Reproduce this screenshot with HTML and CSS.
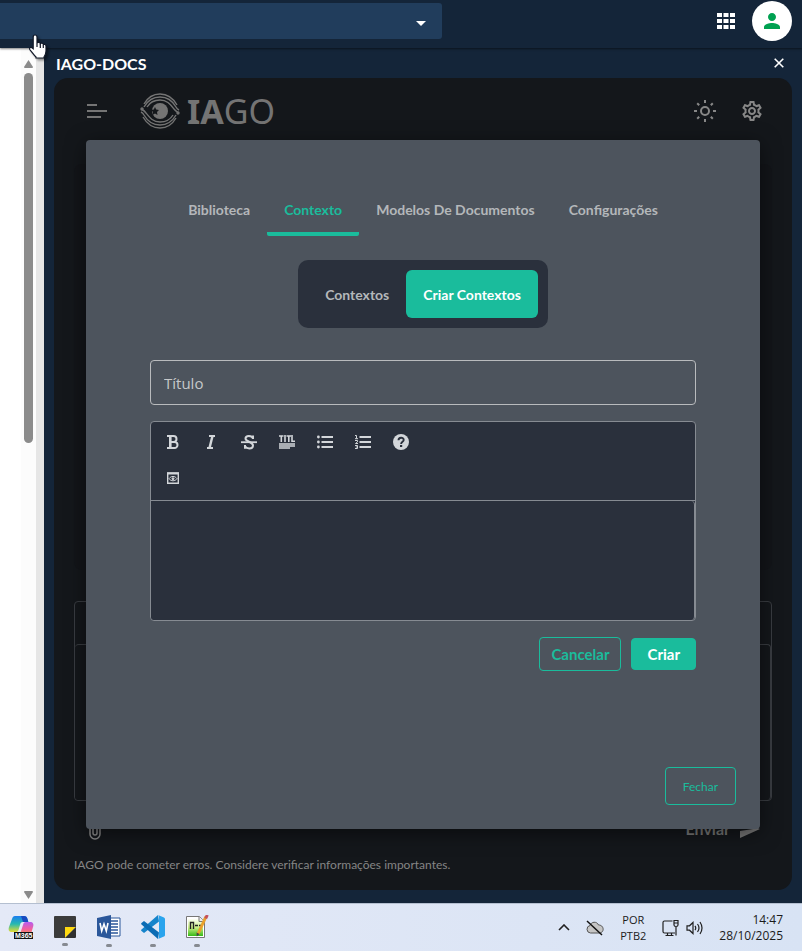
FILE: index.html
```html
<!DOCTYPE html>
<html lang="pt-BR">
<head>
    <meta charset="UTF-8">
    <meta name="viewport" content="width=device-width, initial-scale=1.0">
    <title>IAGO-DOCS</title>
    <link rel="stylesheet" href="styles.css">
</head>
<body>

<header class="topbar">
    <div class="unit">
        <select class="unit-select" aria-label="Unidade"><option></option></select>
        <svg class="unit-caret" width="10" height="5" viewBox="0 0 10 5"><path d="M0 0h10L5 5z" fill="#fff"/></svg>
    </div>
    <button class="icon-btn apps" aria-label="Aplicativos">
        <svg width="18" height="16" viewBox="0 0 18 16" fill="#fff"><path d="M0 0h5v4H0zM6.500 0h5v4h-5zM13 0h5v4h-5zM0 6h5v4H0zM6.500 6h5v4h-5zM13 6h5v4h-5zM0 12h5v4H0zM6.500 12h5v4h-5zM13 12h5v4h-5z"/></svg>
    </button>
    <button class="icon-btn avatar" aria-label="Perfil">
        <svg width="16" height="16" viewBox="4 4 16 16" fill="#00a151"><path d="M12 12c2.210 0 4-1.790 4-4s-1.790-4-4-4-4 1.790-4 4 1.790 4 4 4zm0 2c-2.670 0-8 1.340-8 4v2h16v-2c0-2.660-5.330-4-8-4z"/></svg>
    </button>
    <svg class="cursor" width="24" height="28" viewBox="0 0 24 28"><path d="M8 2c1.500 0 2 1 2 2v6c.5-1 3-1 3.300.6 1-.8 2.900-.4 3 .9 1.200-.5 2.700.1 2.700 1.500v5c0 2.500-.8 4.200-2 6v1H9v-1c-2-1.700-4-5-6-7.200-1.300-1.600.4-3 2-2l1.200 1V4c0-1 .4-2 1.800-2z" fill="#fff" stroke="#111827" stroke-width="1.200"/><path d="M10 10v4M13.300 11v4M16.300 12v3" stroke="#111827" stroke-width="1.200"/></svg>
</header>

<div class="workspace">
    <aside class="document">
        <div class="scroll">
            <svg width="9" height="8" viewBox="0 0 9 8" fill="#8b8b8b"><path d="M4.500 0 9 7q0 1-1 1H1Q0 8 0 7z"/></svg>
            <div class="thumb"></div>
            <svg width="9" height="8" viewBox="0 0 9 8" fill="#8b8b8b"><path d="M4.500 8 0 1q0-1 1-1h7q1 0 1 1z"/></svg>
        </div>
    </aside>

    <section class="panel">
        <div class="panel-head">
            <h1>IAGO-DOCS</h1>
            <button class="icon-btn close" aria-label="Fechar painel">
                <svg width="10" height="10" viewBox="0 0 10 10" stroke="#fff" stroke-width="1.600"><path d="M.7.7l8.600 8.600M9.300.7L.7 9.300"/></svg>
            </button>
        </div>

        <div class="iago">
            <div class="iago-head">
                <button class="icon-btn menu" aria-label="Menu">
                    <svg width="20" height="16" viewBox="0 0 20 16" stroke="#757575" stroke-width="2"><path d="M0 2h10M0 8h20M0 14h14"/></svg>
                </button>
                <div class="logo">
                    <svg width="40" height="36" viewBox="0 0 40 36" fill="none" stroke="#747474" stroke-width="1.400">
                        <path d="M4 11C8 4 13 1 20 1c8 0 13 4 17 11M4 14C8 7 13 4 20 4c7 0 12 3 16 10 1 2 2 2.500 3 3M7 14c3-5 8-7 13-7 7 0 10 4 14 9 1.500 2 2.500 2.500 4 3.500"/>
                        <path d="M36 25C32 32 27 35 20 35c-8 0-13-4-17-11M36 22C32 29 27 32 20 32c-7 0-12-3-16-10-1-2-2-2.500-3-3M33 22c-3 5-8 7-13 7-7 0-10-4-14-9-1-1.500-2-2.500-4-3.500"/>
                        <circle cx="20" cy="18" r="8" fill="#747474" stroke="none"/>
                        <path d="M15 14l1.200 2.600 2.800.4-2 2 .5 3-2.500-1.500L12.500 22l.5-3-2-2 2.800-.4z" fill="#14171b" stroke="none"/>
                        <circle cx="2" cy="16" r="1" fill="#747474"/><circle cx="38" cy="20" r="1" fill="#747474"/>
                    </svg>
                    <span><b>IA</b>GO</span>
                </div>
                <button class="icon-btn" aria-label="Tema claro">
                    <svg width="22" height="22" viewBox="0 0 22 22" fill="none" stroke="#878787" stroke-width="2"><circle cx="11" cy="11" r="4"/><path d="M11 0v3M11 19v3M0 11h3M19 11h3M3.200 3.200l2 2M16.800 16.800l2 2M3.200 18.800l2-2M16.800 5.200l2-2"/></svg>
                </button>
                <button class="icon-btn" aria-label="Ajustes">
                    <svg width="24" height="24" viewBox="0 0 24 24" fill="#878787"><path d="M19.430 12.980c.04-.32.07-.64.07-.98 0-.34-.03-.66-.07-.98l2.110-1.650c.19-.15.24-.42.12-.64l-2-3.460c-.09-.16-.26-.25-.44-.25-.06 0-.12.01-.17.03l-2.490 1c-.52-.4-1.080-.73-1.690-.98l-.38-2.650C14.460 2.180 14.250 2 14 2h-4c-.25 0-.46.18-.49.42l-.38 2.650c-.61.25-1.170.59-1.690.98l-2.490-1c-.06-.02-.12-.03-.18-.03-.17 0-.34.09-.43.25l-2 3.460c-.13.22-.07.49.12.64l2.110 1.650c-.04.32-.07.65-.07.98 0 .33.03.66.07.98l-2.110 1.650c-.19.15-.24.42-.12.64l2 3.460c.09.16.26.25.44.25.06 0 .12-.01.17-.03l2.490-1c.52.4 1.080.73 1.690.98l.38 2.650c.03.24.24.42.49.42h4c.25 0 .46-.18.49-.42l.38-2.650c.61-.25 1.170-.59 1.690-.98l2.490 1c.06.02.12.03.18.03.17 0 .34-.09.43-.25l2-3.460c.12-.22.07-.49-.12-.64l-2.110-1.650zm-1.980-1.710c.04.31.05.52.05.73 0 .21-.02.43-.05.73l-.14 1.130.89.7 1.080.84-.7 1.210-1.270-.51-1.040-.42-.9.68c-.43.32-.84.56-1.250.73l-1.060.43-.16 1.130-.2 1.350h-1.400l-.19-1.350-.16-1.130-1.060-.43c-.43-.18-.83-.41-1.230-.71l-.91-.7-1.060.43-1.270.51-.7-1.210 1.080-.84.89-.7-.14-1.130c-.03-.31-.05-.54-.05-.74s.02-.43.05-.73l.14-1.130-.89-.7-1.080-.84.7-1.210 1.270.51 1.040.42.9-.68c.43-.32.84-.56 1.250-.73l1.060-.43.16-1.130.2-1.350h1.390l.19 1.350.16 1.130 1.060.43c.43.18.83.41 1.230.71l.91.7 1.060-.43 1.270-.51.7 1.210-1.070.85-.89.7.14 1.130zM12 8c-2.210 0-4 1.790-4 4s1.790 4 4 4 4-1.790 4-4-1.790-4-4-4zm0 6c-1.100 0-2-.9-2-2s.9-2 2-2 2 .9 2 2-.9 2-2 2z"/></svg>
                </button>
            </div>
            <div class="chat"></div>
            <div class="composer">
                <div class="composer-tools"></div>
                <textarea class="composer-text" aria-label="Mensagem"></textarea>
            </div>
            <div class="composer-actions">
                <button class="icon-btn" aria-label="Anexar">
                    <svg width="12" height="22" viewBox="0 0 12 22" fill="none" stroke="#858585" stroke-width="1.500"><path d="M11 5v11a5 5 0 0 1-10 0V5a3.500 3.500 0 0 1 7 0v10a2 2 0 0 1-4 0V6"/></svg>
                </button>
                <button class="icon-btn send">Enviar
                    <svg width="20" height="18" viewBox="0 0 20 18" fill="#777"><path d="M0 18 20 9 0 0v7l13 2-13 2z"/></svg>
                </button>
            </div>
            <p class="notice">IAGO pode cometer erros. Considere verificar informações importantes.</p>

            <div class="backdrop">
                <div class="modal" role="dialog" aria-label="Contexto">
                    <nav class="tabs">
                        <a href="#biblioteca">Biblioteca</a>
                        <a href="#contexto" class="active">Contexto</a>
                        <a href="#modelos">Modelos De Documentos</a>
                        <a href="#configuracoes">Configurações</a>
                    </nav>
                    <div class="segmented">
                        <button>Contextos</button>
                        <button class="active">Criar Contextos</button>
                    </div>
                    <form class="form">
                        <input class="title-input" type="text" placeholder="Título" aria-label="Título">
                        <div class="editor">
                            <div class="toolbar">
                                <button type="button" aria-label="Negrito"><svg width="14" height="16" viewBox="0 0 14 16" fill="none" stroke="#d3d6da" stroke-width="2"><path d="M1 2h6.500a2.800 2.800 0 0 1 0 6H4M1 14h7.500a3 3 0 0 0 0-6" /><path d="M4.300 2v12" stroke-width="2.600"/></svg></button>
                                <button type="button" aria-label="Itálico"><svg width="14" height="16" viewBox="0 0 14 16" fill="none" stroke="#d3d6da"><path d="M5 2h6M3 14h6" stroke-width="1.800"/><path d="M8.500 2l-3 12" stroke-width="2.400"/></svg></button>
                                <button type="button" aria-label="Tachado"><svg width="16" height="16" viewBox="0 0 16 16" fill="none" stroke="#d3d6da" stroke-width="2"><path d="M0 8.200h16" stroke-width="1.800"/><path d="M12 5V1.500M12 4.500C11 1 4.500 1 4.500 4.500 4.500 8 12 7.500 12 11.500c0 4-7 3.500-8 .5M4 14.800V11"/></svg></button>
                                <button type="button" aria-label="Cabeçalho"><svg width="16" height="14" viewBox="0 0 16 14" fill="none" stroke="#d3d6da" stroke-width="1.600"><path d="M0 1h4.500M2.300 1v6M6 0v7M7.500 1H12M9.800 1v6M13 0v6.300h3"/><path d="M0 9h16M0 11h16M0 13h11" stroke-width="1.300"/></svg></button>
                                <button type="button" aria-label="Lista"><svg width="16" height="14" viewBox="0 0 16 14" stroke="#d3d6da" stroke-width="2" fill="#d3d6da"><path d="M4.500 2H16M4.500 7H16M4.500 12H16"/><g stroke="none"><circle cx="1.400" cy="2" r="1.400"/><circle cx="1.400" cy="7" r="1.400"/><circle cx="1.400" cy="12" r="1.400"/></g></svg></button>
                                <button type="button" aria-label="Lista numerada"><svg width="16" height="14" viewBox="0 0 16 14" stroke="#d3d6da" fill="none"><path d="M4.500 2H16M4.500 7H16M4.500 12H16" stroke-width="2"/><path d="M0 .5h1.500v3M0 3.700h3M0 5.500h2.500v1.300L.5 8.500H3M0 10.500h2.500v3H0M.8 12h2"/></svg></button>
                                <button type="button" aria-label="Ajuda"><svg width="16" height="16" viewBox="0 0 16 16"><circle cx="8" cy="8" r="8" fill="#d3d6da"/><path d="M5.500 6.200c0-3.300 5.200-3.300 5.200-.3 0 1.800-2.600 1.900-2.600 4" fill="none" stroke="#2a303c" stroke-width="1.900"/><path d="M7 11h2.200v2H7z" fill="#2a303c"/></svg></button>
                                <button type="button" aria-label="Visualizar" class="new-row"><svg width="12" height="12" viewBox="0 0 12 12" fill="none" stroke="#d3d6da"><path d="M.7 1h10.600v10.300H.7z" stroke-width="1.400"/><path d="M0 1.500h12" stroke-width="2"/><path d="M2 6.700c2-3 6-3 8 0-2 2.800-6 2.800-8 0z"/><circle cx="6" cy="6.700" r="1" fill="#d3d6da"/></svg></button>
                            </div>
                            <textarea class="editor-text" aria-label="Conteúdo"></textarea>
                        </div>
                        <div class="form-actions">
                            <button type="button" class="btn outline">Cancelar</button>
                            <button type="button" class="btn primary">Criar</button>
                        </div>
                    </form>
                    <button class="btn dismiss">Fechar</button>
                </div>
            </div>
        </div>
    </section>
</div>

<footer class="taskbar">
    <div class="apps-list">
        <button class="task" aria-label="Copilot">
            <svg width="26" height="24" viewBox="0 0 26 24">
                <defs>
                    <linearGradient id="cop-a" x1="0" y1="0" x2="0" y2="1"><stop offset="0" stop-color="#1b7df0"/><stop offset=".5" stop-color="#27b9b0"/><stop offset="1" stop-color="#e6dc30"/></linearGradient>
                    <linearGradient id="cop-b" x1="0" y1="0" x2="0" y2="1"><stop offset="0" stop-color="#b65cf0"/><stop offset=".6" stop-color="#f2609c"/><stop offset="1" stop-color="#f8935a"/></linearGradient>
                </defs>
                <path d="M7 1h9c2 0 3 1 3.500 3l.8 3H15c-2 0-2.500 1-3 3l-1.500 5c-.5 1.500-1.500 2-3 2H4c-3 0-4-2-3-5L4 4c.5-2 1.500-3 3-3z" fill="url(#cop-a)"/>
                <path d="M13 1h3c2 0 3 1 3.500 3l.8 3H15z" fill="#174ac0"/>
                <path d="M18 7h4c3 0 4 2 3 5l-2 7H12l3-9c.5-2 1-3 3-3z" fill="url(#cop-b)"/>
                <path d="M6 17h19v7H6z" fill="#111"/>
                <text x="7" y="23" fill="#fff" font-family="Liberation Sans" font-weight="700" font-size="7">M365</text>
            </svg>
        </button>
        <button class="task open" aria-label="Notas">
            <svg width="22" height="22" viewBox="0 0 22 22"><path d="M0 1q0-1 1-1h20q1 0 1 1v10L11 22H1q-1 0-1-1z" fill="#3b3b3b"/><path d="M11 11h11L11 22z" fill="#ffd90f"/><path d="M22 11v10q0 1-1 1H11z" fill="#303030"/></svg>
        </button>
        <button class="task open" aria-label="Word">
            <svg width="24" height="24" viewBox="0 0 24 24"><path d="M12 3h11v18H12z" fill="#fff" stroke="#2b579a"/><path d="M14 6h7M14 9h7M14 12h7M14 15h7M14 18h7" stroke="#2b579a" stroke-width="1.300"/><path d="M0 3 14 0v24L0 21z" fill="#2b579a"/><path d="M3 8l1.700 8L7 9l2.300 7L11 8" fill="none" stroke="#fff" stroke-width="1.600"/></svg>
        </button>
        <button class="task open" aria-label="Visual Studio Code">
            <svg width="24" height="24" viewBox="0 0 24 24"><path d="M18 6.500 3 18l-2.500-2q-.8-.8 0-1.500L17 0z" fill="#1684cb"/><path d="M18 17.500 3 6 .5 8q-.8.8 0 1.500L17 24z" fill="#0b6cb4"/><path d="M17 0l6 2.500q1 .5 1 1.500v16q0 1-1 1.500L17 24q1-.5 1-2V2q0-1.500-1-2z" fill="#2aa4ed"/></svg>
        </button>
        <button class="task open" aria-label="Notepad++">
            <svg width="24" height="24" viewBox="0 0 24 24"><defs><linearGradient id="npp" x1="0" y1="0" x2="0" y2="1"><stop offset="0" stop-color="#fdfff6"/><stop offset=".5" stop-color="#c9ee85"/><stop offset="1" stop-color="#35b917"/></linearGradient></defs><path d="M1.500 1.500h13l5 5v16h-18z" fill="#fff" stroke="#777"/><path d="M3 4h11l4 4v13H3z" fill="url(#npp)"/><path d="M14 1.500v5h5.500" fill="#eee" stroke="#777"/><path d="M5.500 14V7.500h3V14M10 10.500h3M14 10.500h2" fill="none" stroke="#222" stroke-width="1.400"/><path d="M21 1.500 13 19" stroke="#e9a12c" stroke-width="3"/><path d="M22.300 0 20.700 3.500" stroke="#c4515b" stroke-width="3"/><path d="M11.500 17.500l.3 4 2.700-2.500z" fill="#444"/></svg>
        </button>
    </div>
    <div class="tray">
        <svg width="12" height="7" viewBox="0 0 12 7" fill="none" stroke="#202020" stroke-width="1.600"><path d="M1 6l5-5 5 5"/></svg>
        <svg class="cloud" width="18" height="16" viewBox="0 0 18 16"><path d="M4.500 13a3.800 3.800 0 0 1-.5-7.500C5 1.500 11 1 12.500 5c5.500-.2 6.500 7.500 1 8z" fill="#c5c5c5" stroke="#555"/><path d="M1 1l15 14" stroke="#111" stroke-width="1.500"/></svg>
        <div class="lang">POR<br>PTB2</div>
        <div class="status">
            <svg width="17" height="18" viewBox="0 0 17 18" fill="none" stroke="#202020" stroke-width="1.200"><path d="M10.500 2H2.500Q1 2 1 3.500v9Q1 14 2.500 14H13M5.500 14v2.500M9.500 14v2.500M3.500 16.500h8M12 1.500h4V6q0 1.500-2 1.500T12 6zM12 4h4M14 7.500v9"/></svg>
            <svg width="17" height="14" viewBox="0 0 17 14" fill="none" stroke="#202020" stroke-width="1.200"><path d="M1 4.800h2.500L7 1.500v11L3.500 9.200H1zM9 4.800q1.500 2.200 0 4.400M11.500 3q3 4 0 8M14 1q4 6 0 12"/></svg>
        </div>
        <div class="clock">14:47<br>28/10/2025</div>
    </div>
</footer>

</body>
</html>
```
FILE: styles.css
```css
* {
    box-sizing: border-box;
}
body {
    margin: 0;
    min-height: 100vh;
    display: flex;
    flex-direction: column;
    font-family: Lato, "Open Sans", sans-serif;
    font-size: 14px;
    background: #142539;
}
button, input, select, textarea {
    font-family: inherit;
    font-size: 15px;
}
button {
    cursor: pointer;
}
svg {
    display: block;
    flex-shrink: 0;
}
.icon-btn {
    display: flex;
    align-items: center;
    justify-content: center;
    padding: 0;
    border: none;
    background: none;
}

/* top bar */
.topbar {
    position: relative;
    z-index: 2;
    display: flex;
    align-items: center;
    height: 48px;
    padding-right: 10px;
    padding-bottom: 6px;
    background: #142539;
    box-shadow: 0 1px 2px rgba(0, 0, 0, 0.5);
}
.unit {
    position: relative;
    width: 56%;
    padding-right: 2px;
}
.unit-select {
    display: block;
    width: 100%;
    height: 36px;
    border: none;
    border-radius: 0 3px 3px 0;
    background: #213d5c;
    appearance: none;
}
.unit-caret {
    position: absolute;
    right: 18px;
    top: 18px;
}
.apps {
    margin-left: auto;
    margin-right: 17px;
}
.avatar {
    width: 40px;
    height: 40px;
    border-radius: 50%;
    background: #fff;
}
.cursor {
    position: absolute;
    left: 27px;
    top: 33px;
    filter: drop-shadow(2px 2px 1px rgba(0, 0, 0, 0.4));
}

/* workspace */
.workspace {
    flex: 1;
    display: flex;
}
.document {
    display: flex;
    justify-content: flex-end;
    width: 44px;
    background: #fff;
    border-right: 8px solid #e6e6e6;
}
.scroll {
    display: flex;
    flex-direction: column;
    align-items: center;
    gap: 5px;
    width: 15px;
    padding: 12px 0 4px;
    background: #fcfcfc;
}
.thumb {
    width: 9px;
    height: 370px;
    margin-bottom: auto;
    border-radius: 5px;
    background: #8b8b8b;
}
.panel {
    flex: 1;
    display: flex;
    flex-direction: column;
    padding: 0 10px 13px;
}
.panel-head {
    display: flex;
    align-items: center;
    justify-content: space-between;
    height: 30px;
    padding: 0 8px 0 2px;
}
.panel-head h1 {
    margin: 0;
    font-size: 16px;
    font-weight: 700;
    color: #fff;
}

/* assistant */
.iago {
    position: relative;
    flex: 1;
    display: flex;
    flex-direction: column;
    padding: 0 20px 16px;
    border-radius: 14px;
    background: #14171b;
}
.iago-head {
    display: flex;
    align-items: center;
    gap: 24px;
    height: 66px;
    padding: 0 8px 0 13px;
}
.logo {
    display: flex;
    align-items: center;
    gap: 7px;
    margin-left: 9px;
    margin-right: auto;
    font-family: "Noto Sans", "Open Sans", sans-serif;
    font-size: 34px;
    line-height: 36px;
    color: #747474;
}
.chat {
    flex: 1;
    margin: 20px 0 31px;
    border-radius: 8px;
    background: #131519;
}
.composer {
    border: 1px solid #393c41;
    border-radius: 4px;
}
.composer-tools {
    height: 42px;
}
.composer-text {
    display: block;
    width: 100%;
    height: 156px;
    border: 1px solid #393c41;
    border-width: 1px 1px 0 0;
    border-radius: 4px;
    background: #14171b;
    resize: none;
}
.composer-actions {
    display: flex;
    align-items: center;
    justify-content: space-between;
    height: 55px;
    padding: 0 12px 0 15px;
}
.send {
    gap: 10px;
    font-size: 16px;
    font-weight: 700;
    color: #777;
}
.notice {
    margin: 0;
    font-size: 12px;
    line-height: 18px;
    color: #858585;
}

/* modal */
.backdrop {
    position: absolute;
    inset: 0;
    display: flex;
    padding: 62px 32px 61px;
}
.modal {
    flex: 1;
    display: flex;
    flex-direction: column;
    align-items: center;
    padding: 46px 24px 24px;
    border-radius: 4px;
    background: #4d545d;
    box-shadow: 0 4px 20px rgba(0, 0, 0, 0.5);
}
.tabs {
    display: flex;
}
.tabs a {
    padding: 16px 17px 14px;
    border-bottom: 4px solid transparent;
    line-height: 16px;
    font-weight: 700;
    color: #b4b7ba;
    text-decoration: none;
}
.tabs .active {
    border-color: #1abc9c;
    border-radius: 2px;
    color: #1abc9c;
}
.segmented {
    display: flex;
    margin: 24px 0 32px;
    padding: 10px;
    border-radius: 10px;
    background: #2a303c;
}
.segmented button {
    height: 48px;
    padding: 0 17px;
    border: none;
    border-radius: 6px;
    background: none;
    font-size: 14px;
    font-weight: 700;
    color: #b4b7ba;
}
.segmented .active {
    background: #1abc9c;
    color: #fff;
}
.form {
    align-self: stretch;
    display: flex;
    flex-direction: column;
    gap: 16px;
    padding: 0 40px;
}
.title-input {
    height: 45px;
    padding: 0 13px;
    border: 1px solid #b9bbbd;
    border-radius: 4px;
    background: none;
    font-family: "Open Sans", "Noto Sans", sans-serif;
    color: #d3d6da;
}
.title-input::placeholder {
    color: #c6c8ca;
    opacity: 1;
}
.editor {
    border: 1px solid #868b92;
    border-radius: 4px;
    background: #2a303c;
}
.toolbar {
    display: grid;
    grid-template-columns: repeat(7, 30px);
    column-gap: 8px;
    row-gap: 6px;
    padding: 5px 7px 7px;
    border-bottom: 1px solid #868b92;
}
.toolbar button {
    display: flex;
    align-items: center;
    justify-content: center;
    height: 30px;
    padding: 0;
    border: none;
    background: none;
}
.toolbar .new-row {
    grid-column: 1;
}
.editor-text {
    display: block;
    width: 100%;
    height: 119px;
    border: none;
    border-right: 1px solid #868b92;
    border-radius: 4px;
    background: #2a303c;
    color: #d3d6da;
    resize: none;
}
.form-actions {
    display: flex;
    align-items: center;
    justify-content: flex-end;
    gap: 10px;
}
.btn {
    border: 1px solid #1abc9c;
    border-radius: 4px;
    background: none;
    color: #1abc9c;
}
.outline {
    height: 34px;
    padding: 0 11px;
    font-weight: 700;
}
.primary {
    height: 32px;
    padding: 0 15px;
    background: #1abc9c;
    font-weight: 700;
    color: #fff;
}
.dismiss {
    align-self: flex-end;
    height: 38px;
    margin-top: auto;
    padding: 0 17px;
    font-size: 12px;
}

/* taskbar */
.taskbar {
    display: flex;
    justify-content: space-between;
    height: 48px;
    padding: 0 19px 0 0;
    border-top: 1px solid #b4bfd0;
    background: linear-gradient(90deg, #e4e9f7, #d8e3f4);
    font-family: "Open Sans", "Noto Sans", sans-serif;
    font-size: 11px;
    line-height: 16px;
    color: #1b1b1b;
}
.apps-list {
    display: flex;
}
.task {
    display: flex;
    flex-direction: column;
    align-items: center;
    justify-content: center;
    width: 44px;
    padding: 0 2px 2px 0;
    border: none;
    background: none;
}
.open::after {
    content: "";
    width: 6px;
    height: 3px;
    margin-top: 5px;
    margin-bottom: -8px;
    border-radius: 2px;
    background: #868a91;
}
.tray {
    display: flex;
    align-items: center;
    gap: 16px;
}
.lang {
    text-align: center;
}
.status {
    display: flex;
    align-items: center;
    gap: 7px;
}
.clock {
    font-size: 12px;
    text-align: right;
}
```
